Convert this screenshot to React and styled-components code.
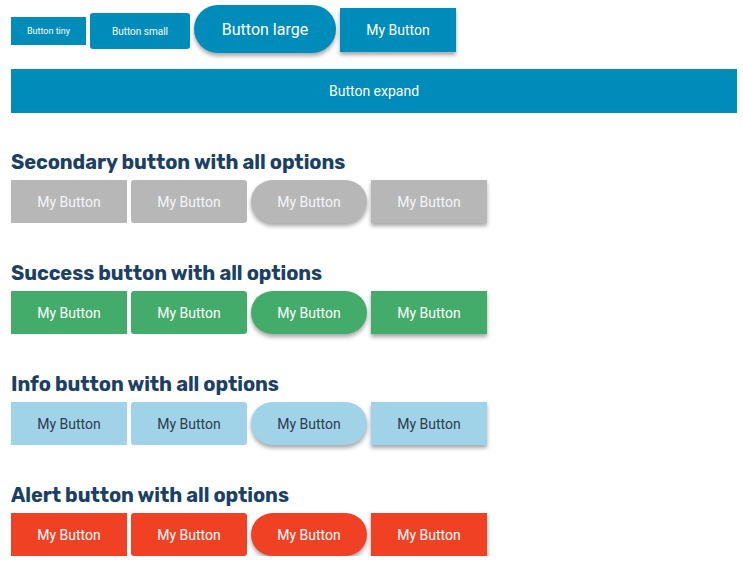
import React from "react";
import styled, { createGlobalStyle, css } from "styled-components";

const Global = createGlobalStyle`
  html, body { margin: 0; padding: 0; background: #fff; }
  body { font-family: Roboto, "Noto Sans", sans-serif; }
`;

const Page = styled.div`
  padding: 0 6px 0 11px;
`;

const TopRow = styled.div`
  display: flex;
  align-items: flex-start;
  gap: 4px;
  height: 56px;
`;

const variants = {
  primary: css`background: #008cba; color: #fff;`,
  secondary: css`background: #b7b7b7; color: #f4f6fa;`,
  success: css`background: #43ac6a; color: #fff;`,
  info: css`background: #a0d3e8; color: #2b3c4e;`,
  alert: css`background: #f04124; color: #fff;`,
};

const shapes = {
  square: css`border-radius: 0;`,
  radius: css`border-radius: 3px;`,
  round: css`border-radius: 1000px; box-shadow: 0 3px 4px rgba(0,0,0,0.35);`,
  raised: css`border-radius: 0; box-shadow: 0 3px 4px rgba(0,0,0,0.35);`,
};

const Button = styled.button`
  border: none;
  margin: 0;
  padding: 0;
  display: flex;
  align-items: center;
  justify-content: center;
  font-family: Roboto, "Noto Sans", sans-serif;
  font-weight: 400;
  cursor: pointer;
  flex: none;
  width: ${(p) => p.$w || 116}px;
  height: ${(p) => p.$h || 43}px;
  font-size: ${(p) => p.$fs || 14}px;
  margin-top: ${(p) => p.$mt || 0}px;
  ${(p) => variants[p.$variant || "primary"]}
  ${(p) => shapes[p.$shape || "square"]}
`;

const ExpandButton = styled(Button)`
  width: 100%;
  height: 44px;
  margin-top: 13px;
`;

const Section = styled.section`
  margin-top: ${(p) => p.$mt}px;
`;

const Heading = styled.h3`
  margin: 0 0 4px 0;
  font-family: Rubik, Roboto, "Noto Sans", sans-serif;
  font-weight: 700;
  font-size: 20px;
  line-height: 28px;
  color: #1a4163;
  letter-spacing: -0.08px;
`;

const Row = styled.div`
  display: flex;
  gap: 4px;
`;

const sections = [
  { key: "secondary", title: "Secondary button with all options" },
  { key: "success", title: "Success button with all options" },
  { key: "info", title: "Info button with all options" },
  { key: "alert", title: "Alert button with all options" },
];

export default function App() {
  return (
    <>
      <Global />
      <Page>
        <TopRow>
          <Button $w={75} $h={28} $fs={9} $mt={17}>Button tiny</Button>
          <Button $w={100} $h={36} $fs={10} $mt={13} $shape="radius">Button small</Button>
          <Button $w={142} $h={48} $fs={16} $mt={5} $shape="round">Button large</Button>
          <Button $w={116} $h={44} $fs={14} $mt={8} $shape="raised">My Button</Button>
        </TopRow>
        <ExpandButton>Button expand</ExpandButton>
        {sections.map((s, i) => (
          <Section key={s.key} $mt={i === 0 ? 35 : 36}>
            <Heading>{s.title}</Heading>
            <Row>
              <Button $variant={s.key} $shape="square">My Button</Button>
              <Button $variant={s.key} $shape="radius">My Button</Button>
              <Button $variant={s.key} $shape="round">My Button</Button>
              <Button $variant={s.key} $shape="raised">My Button</Button>
            </Row>
          </Section>
        ))}
      </Page>
    </>
  );
}
